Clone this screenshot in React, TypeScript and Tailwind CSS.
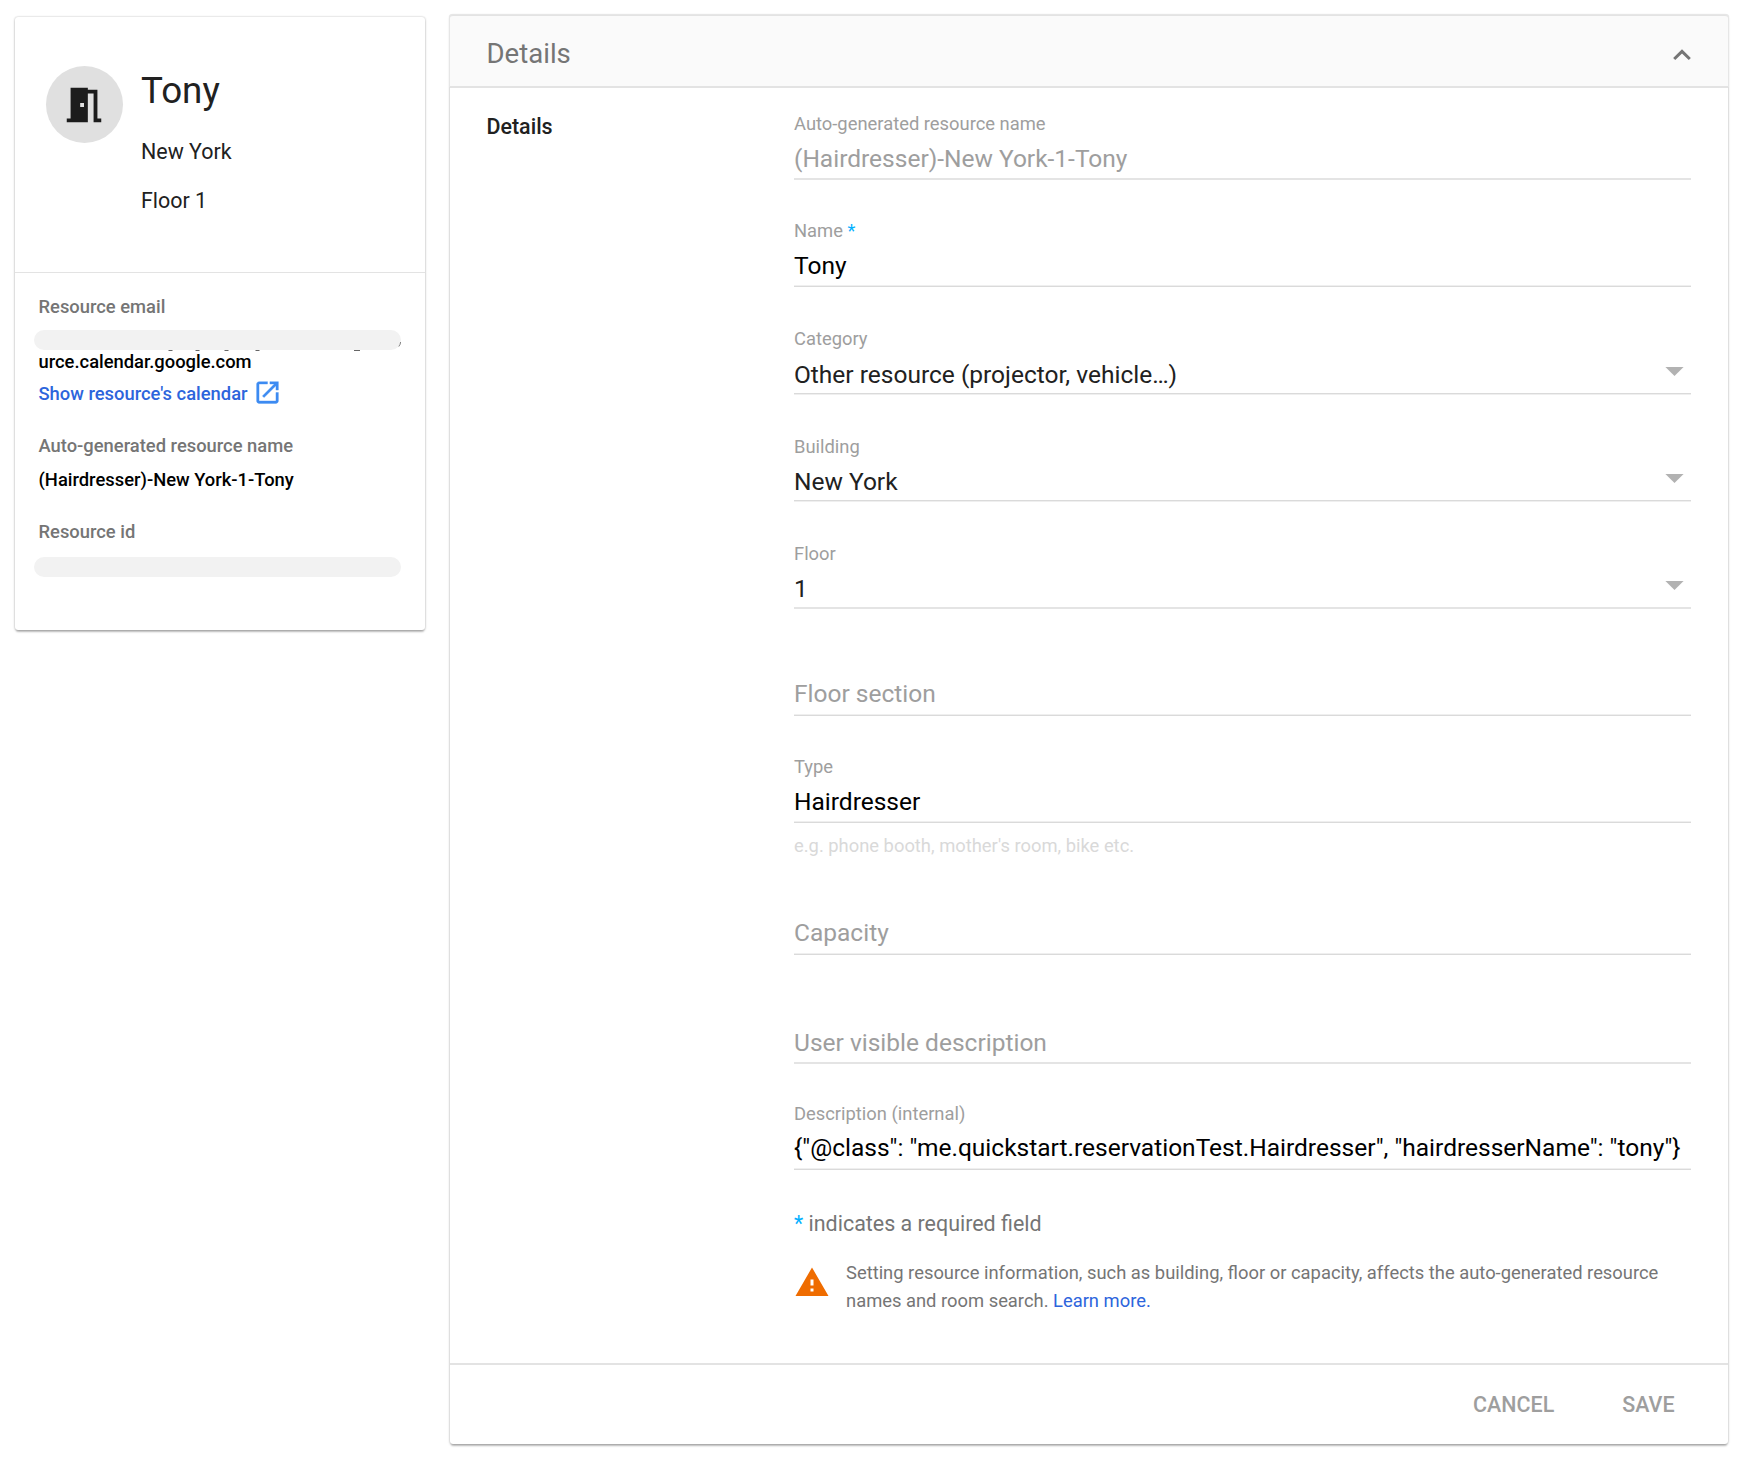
import type { ReactNode } from "react";

const label = "text-[18.375px] leading-[21px] text-[#9e9e9e] whitespace-nowrap";
const value = "text-[24.5px] leading-[29px] whitespace-nowrap";

function Rule({ tone }: { tone: "even" | "upper" | "lower" }) {
  const cls = {
    even: "border-t-[#e4e4e4] border-b-[#e4e4e4]",
    upper: "border-t-[#dadada] border-b-[#efefef]",
    lower: "border-t-[#efefef] border-b-[#dadada]",
  }[tone];
  return <div className={"h-[2px] border-y " + cls} />;
}

function Field({
  name,
  children,
  tone,
  top,
  gap,
  bottom,
  select,
}: {
  name?: ReactNode;
  children: ReactNode;
  tone: "even" | "upper" | "lower";
  top: string;
  gap: string;
  bottom: string;
  select?: boolean;
}) {
  return (
    <div className={top}>
      {name && <div className={label}>{name}</div>}
      <div className={"flex justify-between " + gap + " " + bottom}>
        <div className={value}>{children}</div>
        {select && (
          <svg className="mr-[7px] mt-[7px] h-[10px] w-[19px]" viewBox="0 0 19 10">
            <path d="M0.4 0h18.2L9.5 9.1z" fill="#b2b2b2" />
          </svg>
        )}
      </div>
      <Rule tone={tone} />
    </div>
  );
}

const cardShadow =
  "shadow-[0_3px_2px_-1px_rgba(0,0,0,0.2),0_1px_3px_0_rgba(0,0,0,0.16),0_0_2px_0_rgba(0,0,0,0.24)]";

function ResourceCard() {
  return (
    <aside className={"ml-[15px] mt-[17px] h-[613px] w-[410px] rounded-[3px] bg-white " + cardShadow}>
      <div className="flex h-[256px] border-b border-[#e3e3e3] pl-[31px]">
        <div className="mt-[49px] flex h-[77px] w-[77px] items-center justify-center rounded-full bg-[#e0e0e0]">
          <svg className="-ml-px h-[46px] w-[46px]" viewBox="0 0 24 24" fill="#1c1c1c">
            <path d="M14 6v15H3v-2h2V3h9v1h5v15h2v2h-4V6h-3zm-4 5v2h2v-2h-2z" />
          </svg>
        </div>
        <div className="ml-[18px] pt-[52px] text-[#212121]">
          <div className="text-[36.75px] leading-[43px]">Tony</div>
          <div className="mt-[27px] text-[21.44px] leading-[25px]">New York</div>
          <div className="mt-[24px] text-[21.44px] leading-[25px]">Floor 1</div>
        </div>
      </div>
      <div className="pl-[23.5px] text-[18.375px] font-medium leading-[21px]">
        <div className="pt-[23px] text-[#757575]">Resource email</div>
        <div className="relative -ml-[4.5px] mt-[13px] h-[20px] w-[367px]">
          <div className="h-[20px] rounded-full bg-[#f2f2f2]" />
          {/* descenders of the masked address that show past the bar */}
          <svg className="absolute left-0 top-0 h-[22px] w-[368px]" viewBox="0 0 368 22" fill="none" stroke="#333">
            <path d="M134.500 20.500h4M161.500 20.500h4M190.500 20.500h4M221.500 20.500h4M320 20.500h6" strokeWidth="1" strokeOpacity="0.75" />
            <path d="M366.600 12q-.1 2.500-1.800 4.500" strokeWidth="1" strokeOpacity="0.6" />
          </svg>
        </div>
        <div className="mt-px text-black">urce.calendar.google.com</div>
        <div className="mt-[11px] flex h-[21px] text-[#2d65dc]">
          Show resource&#39;s calendar
          <svg
            className="-mt-[5px] ml-[5px] h-[29px] w-[29px]"
            viewBox="0 0 24 24"
            fill="#3d8bf2"
            stroke="#3d8bf2"
            strokeWidth="0.3"
          >
            <path d="M19 19H5V5h7V3H5c-1.11 0-2 .9-2 2v14c0 1.1.89 2 2 2h14c1.1 0 2-.9 2-2v-7h-2v7zM14 3v2h3.59l-9.83 9.83 1.41 1.41L19 6.41V10h2V3h-7z" />
          </svg>
        </div>
        <div className="mt-[31px] text-[#757575]">Auto-generated resource name</div>
        <div className="mt-[13px] text-black">(Hairdresser)-New York-1-Tony</div>
        <div className="mt-[31px] text-[#757575]">Resource id</div>
        <div className="-ml-[4.5px] mt-[15px] h-[20px] w-[367px] rounded-full bg-[#f2f2f2]" />
      </div>
    </aside>
  );
}

function DetailsCard() {
  return (
    <main className={"ml-[25px] mt-[15px] flex h-[1429px] w-[1278px] flex-col rounded-[3px] bg-white " + cardShadow}>
      <header className="flex h-[73px] items-start justify-between rounded-t-[3px] border-b-2 border-t border-[#e3e3e3] bg-[#fafafa] pl-[36.5px] pr-[37px] shadow-[1px_-1px_0_0_#e6e6e6,-1px_-1px_0_0_#e6e6e6]">
        <h1 className="mt-[21px] text-[27.56px] leading-[33px] text-[#757575]">Details</h1>
        <svg className="mt-[33px] h-[12px] w-[18px]" viewBox="0 0 18 12">
          <path d="M1.2 10L9 2.400L16.800 10" fill="none" stroke="#757575" strokeWidth="3" />
        </svg>
      </header>
      <div className="flex grow">
        <h2 className="mt-[26px] w-[344px] pl-[36.5px] text-[21.44px] font-medium leading-[25px] text-[#212121]">
          Details
        </h2>
        <section className="w-[897px] text-black">
          <Field name="Auto-generated resource name" tone="even" top="pt-[25px]" gap="mt-[10px]" bottom="mb-[5px]">
            <span className="text-[#9e9e9e]">(Hairdresser)-New York-1-Tony</span>
          </Field>
          <Field name={<>Name <span className="text-[#03b0ff]">*</span></>} tone="lower" top="pt-[40px]" gap="mt-[10px]" bottom="mb-[5px]">
            Tony
          </Field>
          <Field name="Category" tone="upper" top="pt-[41px]" gap="mt-[11px]" bottom="mb-[4px]" select>
            <span className="text-[#212121]">Other resource (projector, vehicle…)</span>
          </Field>
          <Field name="Building" tone="upper" top="pt-[41px]" gap="mt-[10px]" bottom="mb-[4px]" select>
            <span className="text-[#212121]">New York</span>
          </Field>
          <Field name="Floor" tone="even" top="pt-[41px]" gap="mt-[10px]" bottom="mb-[4px]" select>
            <span className="text-[#212121]">1</span>
          </Field>
          <Field tone="lower" top="pt-[70px]" gap="mt-0" bottom="mb-[6px]">
            <span className="text-[#9e9e9e]">Floor section</span>
          </Field>
          <Field name="Type" tone="lower" top="pt-[40px]" gap="mt-[10px]" bottom="mb-[5px]">
            Hairdresser
          </Field>
          <div className="mt-[12px] text-[18.375px] leading-[21px] text-[#d9d9d9]">
            e.g. phone booth, mother&#39;s room, bike etc.
          </div>
          <Field tone="lower" top="pt-[62px]" gap="mt-0" bottom="mb-[6px]">
            <span className="text-[#9e9e9e]">Capacity</span>
          </Field>
          <Field tone="even" top="pt-[73px]" gap="mt-0" bottom="mb-[5px]">
            <span className="text-[#9e9e9e]">User visible description</span>
          </Field>
          <Field name="Description (internal)" tone="lower" top="pt-[39px]" gap="mt-[9px]" bottom="mb-[6px]">
            {'{"@class": "me.quickstart.reservationTest.Hairdresser", "hairdresserName": "tony"}'}
          </Field>
          <p className="mt-[41px] text-[21.44px] leading-[25px] text-[#757575]">
            <span className="text-[#03b0ff]">*</span> indicates a required field
          </p>
          <div className="mt-[23px] flex">
            <svg className="mt-[5px] h-[37px] w-[36px] shrink-0" viewBox="0 0 24 24" fill="#ef6c00">
              <path d="M1 21h22L12 2 1 21zm12-3h-2v-2h2v2zm0-4h-2v-4h2v4z" />
            </svg>
            <p className="ml-[16px] text-[18.375px] leading-[27.5px] text-[#757575]">
              Setting resource information, such as building, floor or capacity, affects the auto-generated resource
              <br />
              names and room search. <a className="text-[#2d65dc]">Learn more.</a>
            </p>
          </div>
        </section>
      </div>
      <footer className="flex h-[81px] items-start justify-end border-t-2 border-[#e3e3e3] pr-[53.5px] text-[21.44px] font-medium leading-[25px] text-[#9e9e9e]">
        <button className="mt-[27px]">CANCEL</button>
        <button className="ml-[68px] mt-[27px]">SAVE</button>
      </footer>
    </main>
  );
}

export default function App() {
  return (
    <div className="flex h-[1462px] w-[1744px] items-start overflow-hidden bg-white font-[Roboto,sans-serif]">
      <ResourceCard />
      <DetailsCard />
    </div>
  );
}
